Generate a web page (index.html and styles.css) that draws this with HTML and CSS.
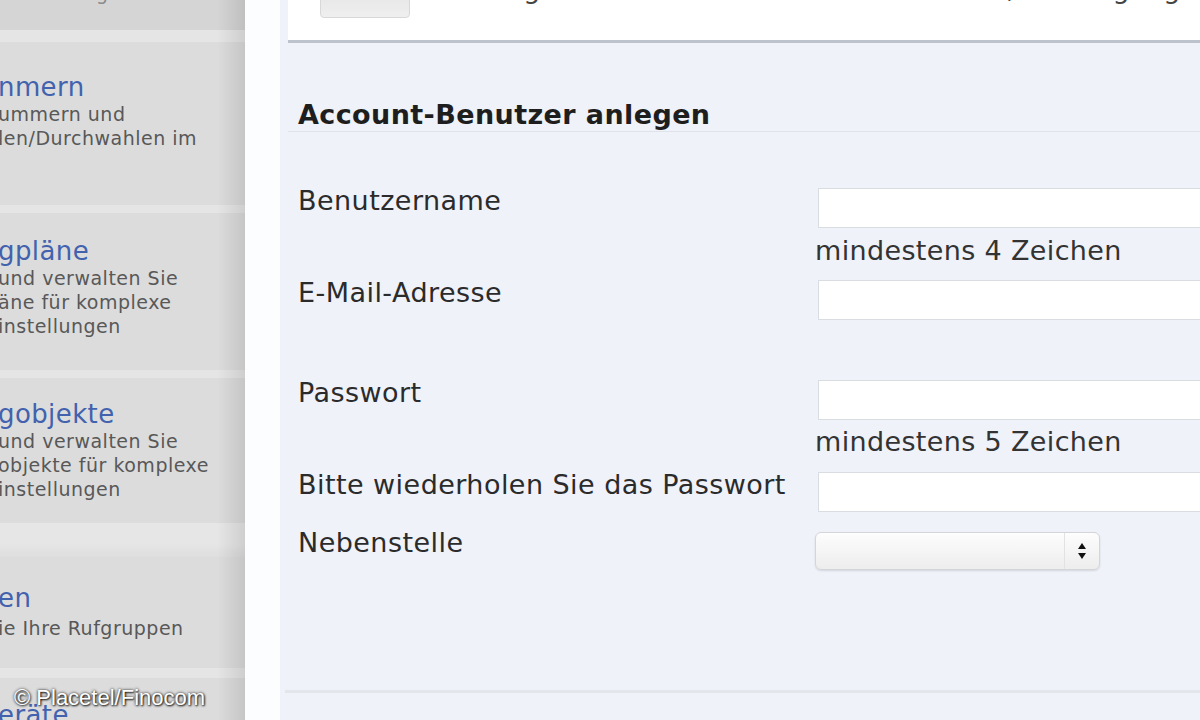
FILE: index.html
```html
<!DOCTYPE html>
<html lang="de">
<head>
<meta charset="utf-8">
<title>Account-Benutzer anlegen</title>
<link rel="stylesheet" href="styles.css">
</head>
<body>
<div class="page">
  <aside class="sidebar">
    <div class="side-item side-item--top"><div class="side-desc side-desc--cut">Einstellungen für Ihren Account</div></div>
    <div class="side-sep side-sep--a"></div>
    <div class="side-item side-item--1">
      <div class="side-title">nmern</div>
      <div class="side-desc">ummern und<br>len/Durchwahlen im</div>
    </div>
    <div class="side-sep side-sep--b"></div>
    <div class="side-item side-item--2">
      <div class="side-title">gpläne</div>
      <div class="side-desc">und verwalten Sie<br>äne für komplexe<br>instellungen</div>
    </div>
    <div class="side-sep side-sep--b"></div>
    <div class="side-item side-item--3">
      <div class="side-title">gobjekte</div>
      <div class="side-desc">und verwalten Sie<br>objekte für komplexe<br>instellungen</div>
    </div>
    <div class="side-sep side-sep--c"></div>
    <div class="side-item side-item--4">
      <div class="side-title">en</div>
      <div class="side-desc side-desc--gap">ie Ihre Rufgruppen</div>
    </div>
    <div class="side-sep side-sep--d"></div>
    <div class="side-item side-item--5">
      <div class="side-title">eräte</div>
    </div>
  </aside>
  <div class="gutter"></div>
  <main class="content">
    <header class="intro">
      <div class="intro-icon"></div>
      <p class="intro-text">Hier legen Sie einen weiteren Benutzer an, der Zugang zu Ihrem Account hat, mit eigenen Rechten</p>
    </header>
    <h2 class="section-title">Account-Benutzer anlegen</h2>
    <form class="form">
      <div class="row row--1">
        <label class="label" for="f-user">Benutzername</label>
        <div class="field">
          <input class="input" id="f-user" type="text">
          <div class="hint">mindestens 4 Zeichen</div>
        </div>
      </div>
      <div class="row row--2">
        <label class="label" for="f-mail">E-Mail-Adresse</label>
        <div class="field"><input class="input" id="f-mail" type="text"></div>
      </div>
      <div class="row row--3">
        <label class="label" for="f-pass">Passwort</label>
        <div class="field">
          <input class="input" id="f-pass" type="password">
          <div class="hint hint--2">mindestens 5 Zeichen</div>
        </div>
      </div>
      <div class="row row--4">
        <label class="label" for="f-pass2">Bitte wiederholen Sie das Passwort</label>
        <div class="field"><input class="input" id="f-pass2" type="password"></div>
      </div>
      <div class="row row--5">
        <span class="label">Nebenstelle</span>
        <div class="field">
          <div class="select">
            <span class="select-value"></span>
            <span class="select-arrows">
              <svg width="10" height="18" viewBox="0 0 10 18"><path d="M5 1 L9 7 L1 7 Z" fill="#111"/><path d="M1 11 L9 11 L5 17 Z" fill="#111"/></svg>
            </span>
          </div>
        </div>
      </div>
    </form>
    <div class="form-end"></div>
  </main>
  <div class="credit">© Placetel/Finocom</div>
</div>
</body>
</html>
```
FILE: styles.css
```css
html, body {
  margin: 0;
  padding: 0;
  background: #eff2f9;
}
body {
  font-family: "DejaVu Sans", Verdana, sans-serif;
  overflow: hidden;
}
.page {
  position: relative;
  display: flex;
  width: 1200px;
  height: 720px;
  overflow: hidden;
}

/* Sidebar */
.sidebar {
  position: relative;
  width: 245px;
  flex: none;
  display: flex;
  flex-direction: column;
  background: #dcdcdc;
  overflow: hidden;
}
.sidebar::after {
  content: "";
  position: absolute;
  top: 0;
  right: 0;
  bottom: 0;
  width: 28px;
  background: linear-gradient(to right, rgba(0,0,0,0), rgba(0,0,0,0.1));
}
.side-item {
  flex: none;
  white-space: nowrap;
  overflow: hidden;
  margin-left: -2px;
}
.side-item--top { height: 30px; background: #d5d5d5; }
.side-item--1 { height: 133px; padding-top: 30px; }
.side-item--2 { height: 134px; padding-top: 23px; }
.side-item--3 { height: 124px; padding-top: 21px; }
.side-item--4 { height: 85px; padding-top: 26px; }
.side-item--5 { flex: 1; padding-top: 22px; }
.side-sep { flex: none; background: #e5e5e5; }
.side-sep--a { height: 12px; }
.side-sep--b { height: 8px; }
.side-sep--c { height: 34px; background: linear-gradient(#e6e6e6 60%, #dedede); }
.side-sep--d { height: 10px; }
.side-title {
  font-size: 26px;
  line-height: 30px;
  color: #4262ae;
  letter-spacing: 0.4px;
}
.side-desc {
  font-size: 19px;
  line-height: 24px;
  color: #585858;
  letter-spacing: 0.5px;
}
.side-desc--cut { margin-top: -19px; color: #8a8a8a; }
.side-desc--gap { margin-top: 3px; }

/* Main */
.gutter {
  width: 35px;
  flex: none;
  background: #fcfdfe;
}
.content {
  flex: 1;
  min-width: 0;
  background: #eff2f9;
  overflow: hidden;
}
.intro {
  display: flex;
  align-items: flex-start;
  margin: -30px 0 0 8px;
  height: 70px;
  background: #ffffff;
  border-bottom: 3px solid #bcc3cc;
  white-space: nowrap;
  overflow: hidden;
}
.intro-icon {
  flex: none;
  width: 90px;
  height: 30px;
  margin: 18px 0 0 32px;
  background: linear-gradient(#e4e4e4, #efefef);
  border: 1px solid #d8d8d8;
  border-radius: 4px;
  box-sizing: border-box;
}
.intro-text {
  margin: 4px 0 0 25px;
  font-size: 27px;
  line-height: 30px;
  color: #444;
}
.section-title {
  margin: 56px 0 0 8px;
  padding: 0 0 0 10px;
  font-size: 27px;
  line-height: 32px;
  font-weight: bold;
  color: #1e1e1e;
  letter-spacing: 0.4px;
  border-bottom: 1px solid #dfe3ea;
}

/* Form */
.form {
  margin: 54px 0 0 18px;
}
.row {
  display: grid;
  grid-template-columns: 517px 1fr;
  align-items: start;
}
.row--2 { margin-top: 12px; }
.row--3 { margin-top: 58px; }
.row--4 { margin-top: 13px; }
.row--5 { margin-top: 16px; }
.label {
  font-size: 27px;
  line-height: 30px;
  color: #2b2b2b;
  letter-spacing: 0.45px;
  white-space: nowrap;
}
.field {
  min-width: 0;
}
.input {
  display: block;
  box-sizing: border-box;
  width: 420px;
  height: 40px;
  margin: 2px 0 0 3px;
  padding: 0 8px;
  border: 1px solid #d9dce1;
  background: #ffffff;
  outline: none;
  font: inherit;
}
.hint {
  margin-top: 8px;
  font-size: 27px;
  line-height: 30px;
  color: #333;
  letter-spacing: 0.35px;
  white-space: nowrap;
}
.hint--2 { margin-top: 7px; }
.select {
  display: flex;
  box-sizing: border-box;
  width: 285px;
  height: 38px;
  margin-top: 4px;
  border: 1px solid #d3d5d9;
  border-radius: 6px;
  background: linear-gradient(#fdfdfd, #ededed);
  box-shadow: 0 1px 2px rgba(0,0,0,0.12);
}
.select-value {
  flex: 1;
}
.select-arrows {
  width: 34px;
  flex: none;
  display: flex;
  align-items: center;
  justify-content: center;
  border-left: 1px solid #e2e2e2;
}
.form-end {
  margin: 120px 0 0 5px;
  border-top: 3px solid #e3e6eb;
}

/* Credit overlay */
.credit {
  position: absolute;
  left: 14px;
  top: 686px;
  font-family: "Liberation Sans", Arial, sans-serif;
  font-size: 22px;
  line-height: 24px;
  color: #ffffff;
  text-shadow: 0 0 3px rgba(0,0,0,0.9), 1px 1px 2px rgba(0,0,0,0.8);
  white-space: nowrap;
}
```
